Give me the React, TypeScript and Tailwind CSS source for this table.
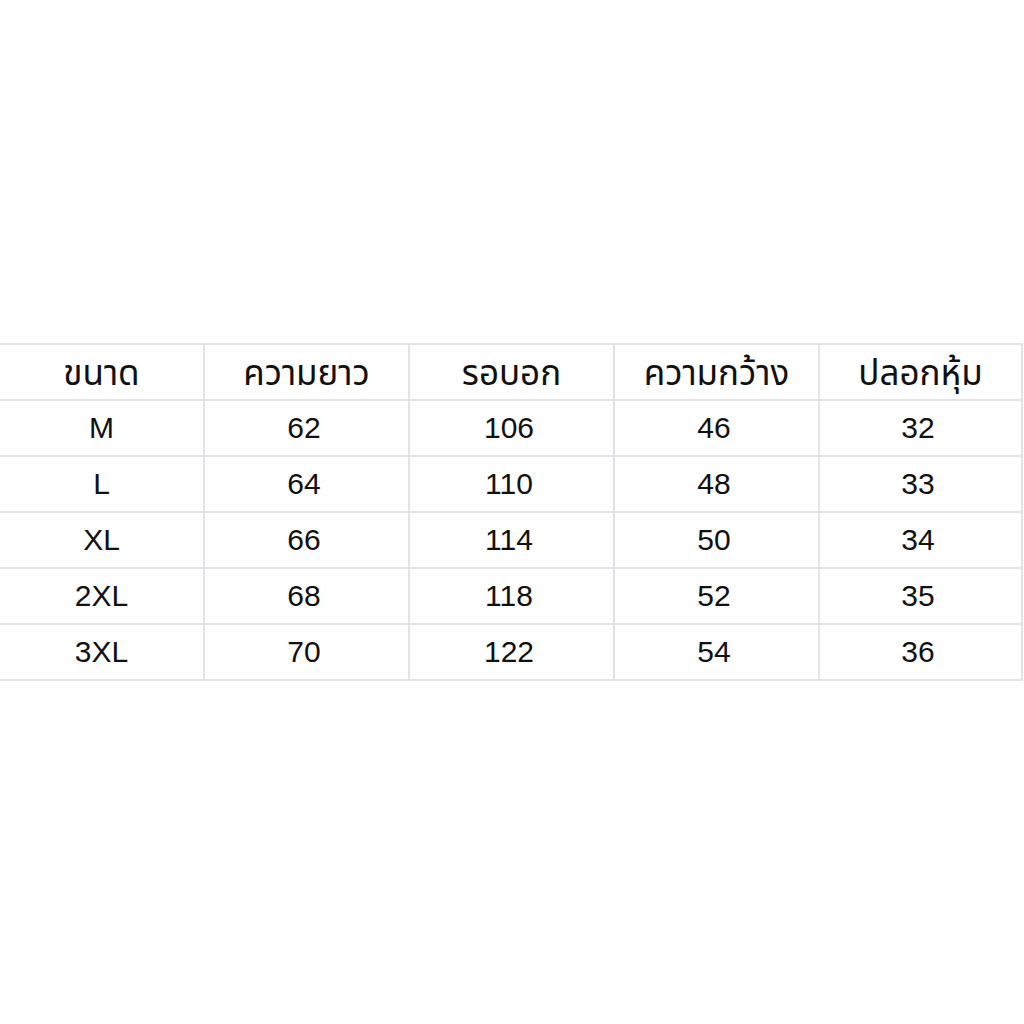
import React from "react";

const header = ["ขนาด", "ความยาว", "รอบอก", "ความกว้าง", "ปลอกหุ้ม"];

const rows = [
  ["M", "62", "106", "46", "32"],
  ["L", "64", "110", "48", "33"],
  ["XL", "66", "114", "50", "34"],
  ["2XL", "68", "118", "52", "35"],
  ["3XL", "70", "122", "54", "36"],
];

const widths = ["w-[205px]", "w-[205px]", "w-[205px]", "w-[205px]", "w-[203px]"];

export default function App() {
  return (
    <div className="w-[1024px] h-[1024px] bg-white overflow-hidden pt-[343px]">
      <table
        className="table-fixed border-collapse -ml-[2px] w-[1023px] text-[#111] text-[30px] leading-none"
        style={{ fontFamily: '"Liberation Sans", Arial, "Noto Sans Thai", sans-serif' }}
      >
        <colgroup>
          {widths.map((w, i) => (
            <col key={i} className={w} />
          ))}
        </colgroup>
        <thead>
          <tr className="h-[56px]">
            {header.map((h) => (
              <th key={h} className="border-2 border-[#e2e2e7] font-normal text-[35px] text-center align-middle">
                {h}
              </th>
            ))}
          </tr>
        </thead>
        <tbody>
          {rows.map((r) => (
            <tr key={r[0]} className="h-[56px]">
              {r.map((c, i) => (
                <td
                  key={i}
                  className={
                    i === 0
                      ? "border-2 border-[#e2e2e7] text-center align-middle"
                      : "border-2 border-[#e2e2e7] text-center align-middle pr-[5px]"
                  }
                >
                  {c}
                </td>
              ))}
            </tr>
          ))}
        </tbody>
      </table>
    </div>
  );
}
